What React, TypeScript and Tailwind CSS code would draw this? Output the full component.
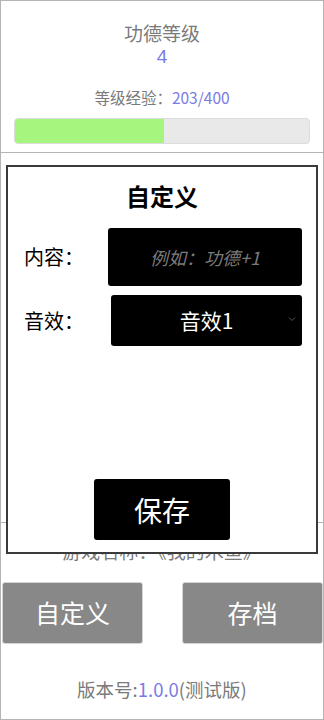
import React from 'react';

const font = { fontFamily: '"Noto Sans CJK SC", "Noto Sans", sans-serif' };

export default function App() {
  const exp = 203;
  const max = 400;

  return (
    <div
      className="relative w-[324px] h-[720px] overflow-hidden bg-white border border-[#b4b4b4] flex flex-col"
      style={font}
    >
      {/* Level header */}
      <div className="pt-[21px] pb-[8px] border-b border-[#b4b4b4] flex flex-col items-center">
        <div className="text-[19px] leading-[21px] text-[#7a7a7a]">功德等级</div>
        <div className="mt-[4px] text-[19px] leading-[20px] text-[#7b7be6] font-['Liberation_Sans',sans-serif]">4</div>
        <div className="mt-[20px] text-[15.5px] leading-[20px] text-[#7a7a7a]">
          等级经验：<span className="text-[#7b7be6]">203/400</span>
        </div>
        <div className="mt-[11px] w-[296px] h-[26px] rounded-[4px] bg-[#e9e9e9] border border-[#dcdcdc] overflow-hidden">
          <div className="h-full bg-[#a5f57f]" style={{ width: `${(exp / max) * 100}%` }} />
        </div>
      </div>

      {/* Main area (covered by dialog) */}
      <div className="h-[370px] border-b border-[#b4b4b4]" />

      {/* Footer */}
      <div className="flex flex-col items-center">
        <div className="pt-[15px] text-[19px] leading-[26px] text-[#7a7a7a]">游戏名称：《我的木鱼》</div>
        <div className="mt-[18px] w-full flex justify-between pl-[1px]">
          <button className="w-[141px] h-[62px] rounded-[3px] bg-[#888888] border border-[#d4d4d4] text-white text-[25px]">
            自定义
          </button>
          <button className="w-[141px] h-[62px] rounded-[3px] bg-[#888888] border border-[#d4d4d4] text-white text-[25px]">
            存档
          </button>
        </div>
        <div className="mt-[32px] text-[18.5px] leading-[26px] text-[#7a7a7a]">
          版本号:<span className="text-[#7b7be6]">1.0.0</span>(测试版)
        </div>
      </div>

      {/* Custom dialog */}
      <div className="absolute left-[5px] top-[164px] w-[312px] h-[389px] bg-white border-2 border-[#3a3a3a] flex flex-col">
        <div className="pt-[13px] text-center text-[24px] leading-[32px] font-bold text-black">自定义</div>

        <div className="mt-[16px] pl-[16px] pr-[14px] flex items-center justify-between">
          <span className="text-[20px] text-black">内容：</span>
          <input
            className="w-[194px] h-[58px] rounded-[3px] bg-black text-center text-white text-[18px] italic outline-none placeholder:text-[#7a7a7a] placeholder:italic"
            placeholder="例如：功德+1"
          />
        </div>

        <div className="mt-[9px] pl-[16px] pr-[14px] flex items-center justify-between">
          <span className="text-[20px] text-black">音效：</span>
          <div className="relative w-[191px] h-[51px] rounded-[3px] bg-black flex items-center justify-center text-white text-[21px]">
            音效1
            <svg
              className="absolute right-[6px] top-[21px]"
              width="8"
              height="6"
              viewBox="0 0 8 6"
              fill="none"
              stroke="#555"
              strokeWidth="1"
            >
              <path d="M1 1.5 L4 4.5 L7 1.5" />
            </svg>
          </div>
        </div>

        <button className="mt-[133px] mx-auto w-[136px] h-[61px] rounded-[3px] bg-black text-white text-[28px]">
          保存
        </button>
      </div>
    </div>
  );
}
